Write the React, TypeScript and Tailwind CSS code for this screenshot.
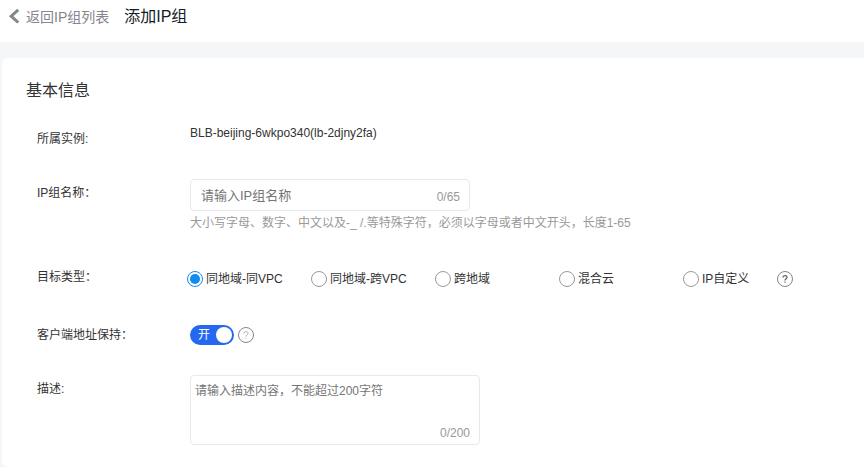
import { useState, type ReactNode } from "react"

const TARGET_TYPES = [
  { value: "same-vpc", label: "同地域-同VPC" },
  { value: "cross-vpc", label: "同地域-跨VPC" },
  { value: "cross-region", label: "跨地域" },
  { value: "hybrid", label: "混合云" },
  { value: "custom", label: "IP自定义" },
]

interface RowProps {
  label: string
  htmlFor?: string
  id?: string
  children: ReactNode
}

function FormRow({ label, htmlFor, id, children }: RowProps) {
  const cls = "w-[153px] shrink-0 pt-1 leading-5"
  return (
    <div className="flex items-start">
      {htmlFor ? (
        <label htmlFor={htmlFor} id={id} className={cls}>{label}</label>
      ) : (
        <div id={id} className={cls}>{label}</div>
      )}
      <div className="min-w-0 flex-1">{children}</div>
    </div>
  )
}

function HelpButton({ label, dark }: { label: string; dark?: boolean }) {
  return (
    <button type="button" aria-label={label} className="size-4 shrink-0">
      <svg viewBox="0 0 16 16" className="size-4" fill="none">
        <circle cx="8" cy="8" r="7.5" stroke="#84868c" />
        <path
          d="M6 6.6C6 5.3 6.8 4.6 8 4.6s2 .7 2 1.8c0 1.4-2 1.5-2 3.1M8 10.6v1.1"
          stroke={dark ? "#5c5f66" : "#a8aaae"}
          strokeWidth={dark ? 1.2 : 1}
        />
      </svg>
    </button>
  )
}

export default function App() {
  const [name, setName] = useState("")
  const [desc, setDesc] = useState("")
  const [target, setTarget] = useState("same-vpc")
  const [keepAddress, setKeepAddress] = useState(true)

  return (
    <div
      lang="zh-CN"
      className="min-h-screen bg-[#f4f6f8] font-['Liberation_Sans','Noto_Sans_CJK_SC',sans-serif] text-xs text-[#333]"
    >
      <header className="flex h-[42px] items-start bg-white px-2 pt-[5px]">
        <a href="#list" className="flex items-center text-sm leading-6 text-[#84868c]">
          <svg viewBox="0 0 12 16" className="mr-1.5 h-4 w-3" fill="none" stroke="currentColor" strokeWidth="3">
            <path d="M10.2.9 3.2 7.2l7 6.3" />
          </svg>
          返回IP组列表
        </a>
        <h1 className="ml-[15px] text-base leading-6 text-[#151b26]">添加IP组</h1>
      </header>

      <main className="mt-4 ml-0.5 rounded-l-md bg-white pt-[21px] pb-[22px]">
        <h2 className="pl-6 text-base leading-6">基本信息</h2>

        <form className="mt-[22px] flex flex-col gap-[30px] pl-[35px]">
          <FormRow label="所属实例:">
            <p className="leading-4">BLB-beijing-6wkpo340(lb-2djny2fa)</p>
          </FormRow>

          <FormRow label="IP组名称：" htmlFor="group-name">
            <div className="relative w-[280px] max-w-full">
              <input
                id="group-name"
                type="text"
                maxLength={65}
                value={name}
                onChange={(e) => setName(e.target.value)}
                placeholder="请输入IP组名称"
                className="block h-8 w-full rounded border border-[#e8e9eb] pr-12 pl-2.5 text-[13px] outline-none placeholder:text-[#757575] focus:border-[#2468f2]"
              />
              <span className="absolute right-2.5 bottom-1 leading-5 text-[#999]">{name.length}/65</span>
            </div>
            <p className="mt-0.5 leading-5 text-[#999]">
              大小写字母、数字、中文以及-_ /.等特殊字符，必须以字母或者中文开头，长度1-65
            </p>
          </FormRow>

          <FormRow label="目标类型：" id="target-label">
            <div role="radiogroup" aria-labelledby="target-label" className="-ml-[3px] flex flex-wrap pt-1">
              {TARGET_TYPES.map((t) => (
                <label key={t.value} className="flex h-6 w-[124px] items-center gap-[3px] last-of-type:w-[94px]">
                  <input
                    type="radio"
                    name="target"
                    value={t.value}
                    checked={target === t.value}
                    onChange={() => setTarget(t.value)}
                    className="size-4 appearance-none rounded-full border border-[#999] bg-clip-content p-0.5 checked:border-[#108cee] checked:bg-[#108cee]"
                  />
                  {t.label}
                </label>
              ))}
              <div className="flex h-6 items-center">
                <HelpButton label="目标类型说明" dark />
              </div>
            </div>
          </FormRow>

          <FormRow label="客户端地址保持：" id="keep-label">
            <div className="flex items-center gap-1 pt-1">
              <button
                type="button"
                role="switch"
                aria-checked={keepAddress}
                aria-labelledby="keep-label"
                onClick={() => setKeepAddress(!keepAddress)}
                className={`flex h-5 w-11 items-center justify-between rounded-full pr-0.5 pl-2 text-white ${
                  keepAddress ? "bg-[#2468f2]" : "flex-row-reverse bg-[#b8babf]"
                }`}
              >
                <span className="leading-5">{keepAddress ? "开" : "关"}</span>
                <span className="size-4 rounded-full bg-white" />
              </button>
              <HelpButton label="客户端地址保持说明" />
            </div>
          </FormRow>

          <FormRow label="描述:" htmlFor="description">
            <div className="relative w-[290px] max-w-full">
              <textarea
                id="description"
                maxLength={200}
                value={desc}
                onChange={(e) => setDesc(e.target.value)}
                placeholder="请输入描述内容，不能超过200字符"
                className="block h-[70px] w-full resize-none rounded border border-[#e8e9eb] px-1 py-[5px] leading-5 outline-none placeholder:text-[#757575] focus:border-[#2468f2]"
              />
              <span className="absolute right-2.5 bottom-0.5 leading-5 text-[#999]">{desc.length}/200</span>
            </div>
          </FormRow>
        </form>
      </main>
    </div>
  )
}
